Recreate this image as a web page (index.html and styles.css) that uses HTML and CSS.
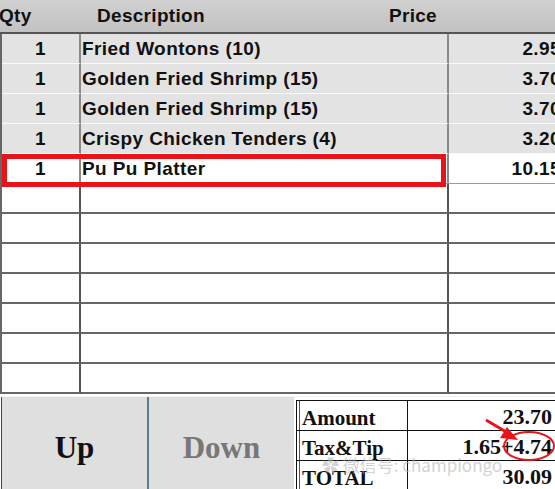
FILE: index.html
```html
<!DOCTYPE html>
<html>
<head>
<meta http-equiv="Content-Type" content="text/html; charset=utf-8">
<title>Order</title>
<link rel="stylesheet" href="styles.css">
</head>
<body>
<div id="screen">
  <div class="head">
    <div class="h-qty">Qty</div>
    <div class="h-desc">Description</div>
    <div class="h-price">Price</div>
  </div>
  <div class="rows">
    <div class="row item"><div class="qty">1</div><div class="desc">Fried Wontons (10)</div><div class="price">2.95</div></div>
    <div class="row item"><div class="qty">1</div><div class="desc">Golden Fried Shrimp (15)</div><div class="price">3.70</div></div>
    <div class="row item"><div class="qty">1</div><div class="desc">Golden Fried Shrimp (15)</div><div class="price">3.70</div></div>
    <div class="row item"><div class="qty">1</div><div class="desc">Crispy Chicken Tenders (4)</div><div class="price">3.20</div></div>
    <div class="row sel"><div class="qty">1</div><div class="desc">Pu Pu Platter</div><div class="price">10.15</div></div>
    <div class="row empty"><div class="qty"></div><div class="desc"></div><div class="price"></div></div>
    <div class="row empty"><div class="qty"></div><div class="desc"></div><div class="price"></div></div>
    <div class="row empty"><div class="qty"></div><div class="desc"></div><div class="price"></div></div>
    <div class="row empty"><div class="qty"></div><div class="desc"></div><div class="price"></div></div>
    <div class="row empty"><div class="qty"></div><div class="desc"></div><div class="price"></div></div>
    <div class="row empty"><div class="qty"></div><div class="desc"></div><div class="price"></div></div>
    <div class="row empty"><div class="qty"></div><div class="desc"></div><div class="price"></div></div>
  </div>
  <div class="bottom">
    <div class="btn up">Up</div>
    <div class="btn down">Down</div>
    <div class="sum">
      <div class="s-label">Amount</div><div class="s-val">23.70</div>
      <div class="s-label">Tax&amp;Tip</div><div class="s-val">1.65+4.74</div>
      <div class="s-label">TOTAL</div><div class="s-val">30.09</div>
    </div>
  </div>
  <div class="wm">&#10047; 微信号: championgo</div>
  <svg class="marks" width="555" height="489" viewBox="0 0 555 489">
    <rect x="4.5" y="156.5" width="439" height="28" fill="none" stroke="#e8141a" stroke-width="5"/>
    <ellipse cx="529" cy="446" rx="25" ry="14" fill="none" stroke="#e8141a" stroke-width="2"/>
    <line x1="486" y1="420" x2="508" y2="433" stroke="#e8141a" stroke-width="3"/>
    <polygon points="518,440 500,438 507,427" fill="#e8141a"/>
  </svg>
</div>
</body>
</html>
```

FILE: styles.css
```css
body { margin: 0; background: white; }
#screen {
  position: relative;
  width: 555px;
  height: 489px;
  overflow: hidden;
  font-family: "Liberation Sans", Arial, sans-serif;
  font-weight: bold;
  color: #111;
}
.head {
  height: 32px;
  display: grid;
  grid-template-columns: 97px 292px 1fr;
  align-items: center;
  font-size: 19px;
  letter-spacing: 0.3px;
  background: linear-gradient(#d0d0d0, #c2c2c2);
  border-bottom: 2px solid #555;
  width: 565px;
}
.h-qty { margin-left: -1px; }

.rows { width: 565px; border-left: 2px solid #666; }
.row {
  display: grid;
  grid-template-columns: 79px 368px 1fr;
  height: 30px;
  font-size: 19px;
  letter-spacing: 0.4px;
}
.row > div { display: flex; align-items: center; }
.qty { justify-content: center; border-right: 2px solid #8a8a8a; }
.desc { padding-left: 1px; border-right: 2px solid #8a8a8a; }
.price { justify-content: flex-end; padding-right: 6px; }

.item { background: #e3e3e3; }
.item > div { border-bottom: 1px solid #fafafa; box-sizing: border-box; }
.sel { background: white; }
.sel > div { border-bottom: 1px solid #9a9a9a; box-sizing: border-box; }
.empty > div { border-bottom: 2px solid #666; box-sizing: border-box; }
.empty .qty, .empty .desc { border-right-color: #555; }

.bottom {
  display: flex;
  height: 93px;
  margin-top: 2px;
  border-top: 1px solid #f4f4f4;
  margin-left: 1px;
}
.btn {
  display: flex;
  align-items: center;
  justify-content: center;
  background: #dfdfdf;
  font-family: "Liberation Serif", "Times New Roman", serif;
  font-size: 31px;
  padding-top: 8px;
}
.up { width: 145px; border-left: 1px solid #444; border-right: 2px solid #5d7b90; color: #111; }
.down { width: 145px; color: #777; }
.sum {
  flex: 1;
  margin-left: 2px;
  margin-top: 3px;
  display: grid;
  grid-template-columns: 111px 1fr;
  grid-template-rows: 30px 30px 31px;
  border-left: 1px solid #111;
  border-top: 1px solid #111;
  box-shadow: inset 2px 0 0 white, inset 3px 0 0 #555;
  background: white;
  font-family: "Liberation Serif", "Times New Roman", serif;
  font-size: 21px;
}
.s-label { padding-left: 5px; padding-top: 5px; border-right: 1px solid #111; border-bottom: 1px solid #111; }
.s-val { text-align: right; padding-right: 3px; padding-top: 3px; font-size: 22px; border-bottom: 1px solid #111; }

.wm {
  position: absolute;
  left: 322px;
  top: 452px;
  font-family: "Noto Sans CJK SC", "Liberation Sans", sans-serif;
  font-weight: normal;
  font-size: 17px;
  color: rgba(180, 180, 180, 0.6);
}
.marks { position: absolute; left: 0; top: 0; }
```
